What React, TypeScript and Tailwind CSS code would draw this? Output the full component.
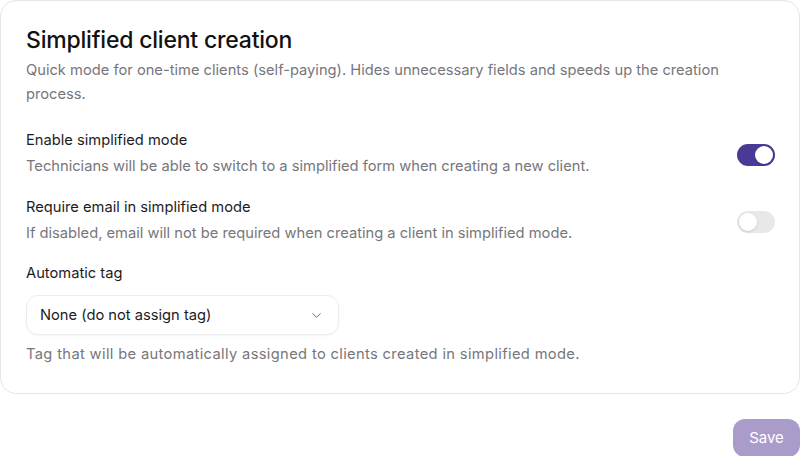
import { ChevronDown } from "lucide-react";

function Toggle({ on }: { on: boolean }) {
  return (
    <div
      className={`relative w-[38px] h-[22px] rounded-full shrink-0 ${on ? "bg-[#4a3a96]" : "bg-[#e8e8ea]"}`}
    >
      <span
        className={`absolute top-[2px] w-[18px] h-[18px] rounded-full bg-white shadow-sm ${on ? "left-[18px]" : "left-[2px]"}`}
      />
    </div>
  );
}

export default function App() {
  return (
    <div className="w-[800px] h-[456px] bg-white font-['Inter',sans-serif] text-[#1c1c1e]">
      <div className="border border-[#e6e6e8] rounded-[16px] pt-[22px] px-[25px] pb-[26px] h-[394px]">
        <h2 className="text-[23px] leading-[34px] font-medium tracking-[-0.2px] text-[#111]">
          Simplified client creation
        </h2>
        <p className="mt-[1px] text-[14.7px] leading-[24px] text-[#76767c] pr-[40px]">
          Quick mode for one-time clients (self-paying). Hides unnecessary fields and speeds up the creation process.
        </p>

        <div className="mt-[22px] flex items-center justify-between">
          <div>
            <div className="text-[14.7px] leading-[24px] text-[#1c1c1e]">Enable simplified mode</div>
            <div className="mt-[2px] text-[14.7px] leading-[24px] text-[#76767c]">
              Technicians will be able to switch to a simplified form when creating a new client.
            </div>
          </div>
          <div className="mr-[-1px] mt-[4px]">
            <Toggle on />
          </div>
        </div>

        <div className="mt-[17px] flex items-center justify-between">
          <div>
            <div className="text-[14.7px] leading-[24px] text-[#1c1c1e]">Require email in simplified mode</div>
            <div className="mt-[2px] text-[14.7px] leading-[24px] text-[#76767c]">
              If disabled, email will not be required when creating a client in simplified mode.
            </div>
          </div>
          <div className="mr-[-1px] mt-[4px]">
            <Toggle on={false} />
          </div>
        </div>

        <div className="mt-[16px] text-[14.7px] leading-[24px] text-[#1c1c1e]">Automatic tag</div>
        <div className="mt-[10px] w-[313px] h-[40px] rounded-[12px] border border-[#ececee] shadow-[0_1px_2px_rgba(0,0,0,0.05)] flex items-center justify-between pl-[13px] pr-[14px]">
          <span className="text-[14.7px] text-[#1c1c1e]">None (do not assign tag)</span>
          <ChevronDown className="w-[15px] h-[15px] text-[#6e6e74]" strokeWidth={1.6} />
        </div>
        <p className="mt-[7px] text-[14.7px] tracking-[0.35px] leading-[24px] text-[#76767c]">
          Tag that will be automatically assigned to clients created in simplified mode.
        </p>
      </div>

      <div className="flex justify-end mt-[25px]">
        <button className="w-[67px] h-[38px] rounded-[12px] bg-[#a99ccb] text-white text-[15px]">
          Save
        </button>
      </div>
    </div>
  );
}
